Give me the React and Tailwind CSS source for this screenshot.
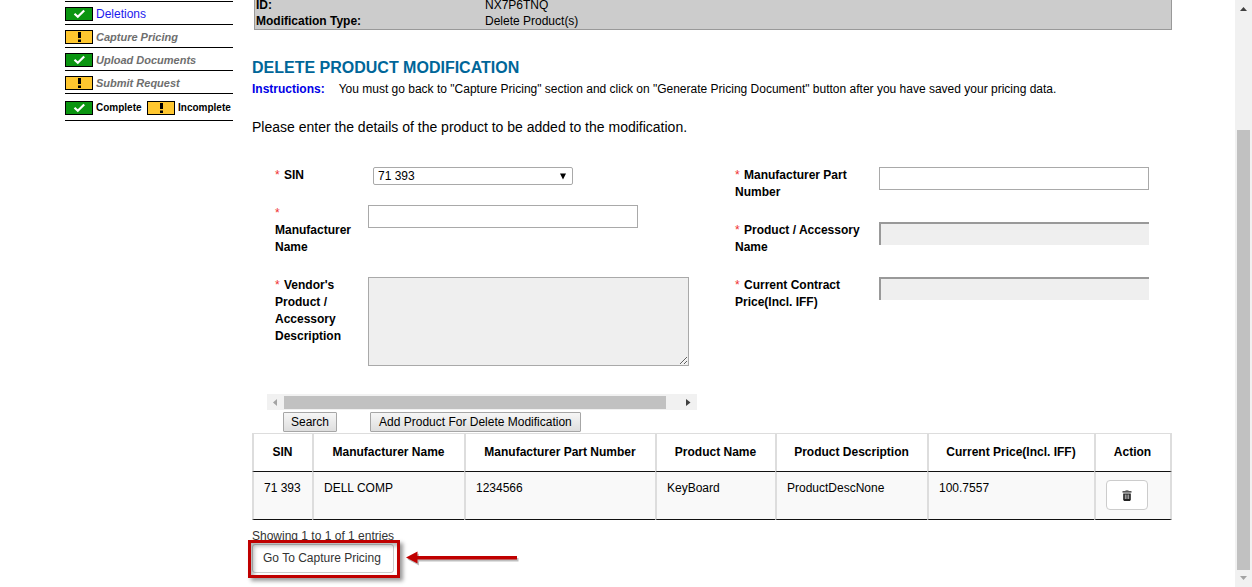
import React from "react";

const NAV = [
  { label: "Deletions", done: true, current: true },
  { label: "Capture Pricing", done: false },
  { label: "Upload Documents", done: true },
  { label: "Submit Request", done: false },
];

const PRODUCTS = [
  {
    sin: "71 393",
    manufacturer: "DELL COMP",
    part: "1234566",
    name: "KeyBoard",
    description: "ProductDescNone",
    price: "100.7557",
  },
];

function StatusIcon({ done }) {
  return (
    <svg viewBox="0 0 28 14" className="h-[14px] w-7 shrink-0" aria-hidden="true">
      <rect x="0.5" y="0.5" width="27" height="13" fill={done ? "#0a9510" : "#ffc72f"} stroke="#000" />
      {done ? (
        <path d="M9.500 6.800l3.300 3L19.200 3.500" fill="none" stroke="#fff" strokeWidth="2.200" />
      ) : (
        <path d="M13 2h3v6h-3zM13 9.500h3V12h-3z" fill="#000" />
      )}
    </svg>
  );
}

function Sidebar() {
  return (
    <nav className="ml-[65px] w-[168px] shrink-0 pt-px">
      <ul className="border-t border-black">
        {NAV.map((item) => (
          <li key={item.label} className="flex h-[23px] items-center gap-[3px] border-b border-black pt-[2px]">
            <StatusIcon done={item.done} />
            <a
              href="#"
              className={
                item.current
                  ? "text-[12px] leading-4 text-[#1a1aee]"
                  : "text-[11px] leading-4 font-bold text-[#6e6e6e] italic"
              }
            >
              {item.label}
            </a>
          </li>
        ))}
        <li className="flex h-[27px] items-center border-b border-black pt-[2px] text-[10px] leading-4 font-bold">
          <StatusIcon done />
          <span className="ml-[3px] w-[51px]">Complete</span>
          <StatusIcon done={false} />
          <span className="ml-[3px]">Incomplete</span>
        </li>
      </ul>
    </nav>
  );
}

function Label({ htmlFor, className, children }) {
  return (
    <label htmlFor={htmlFor} className={`shrink-0 pt-px font-bold ${className}`}>
      <span className="mr-px font-normal text-[#f03030]">*</span> {children}
    </label>
  );
}

const PLAIN = "h-[23px] w-[270px] border border-[#a9a9a9] bg-white px-1";
const SUNK =
  "h-[23px] w-[270px] border-t-2 border-l-2 border-[#999] bg-[#efefef] px-1";

function HorizontalBar() {
  return (
    <div className="flex h-4 items-center bg-[#f1f1f1]" aria-hidden="true">
      <svg viewBox="0 0 17 16" className="h-4 w-[17px]">
        <path d="M10 5v7L6 8.5z" fill="#a3a3a3" />
      </svg>
      <div className="h-[13px] w-[382px] bg-[#c1c1c1]" />
      <svg viewBox="0 0 17 16" className="ml-auto h-4 w-[17px]">
        <path d="M6 5v7l4.500-3.500z" fill="#404040" />
      </svg>
    </div>
  );
}

function ProductForm() {
  return (
    <form className="flex justify-between pr-[23px] pl-[15px]" onSubmit={(e) => e.preventDefault()}>
      <div className="w-[430px]">
        <div className="flex h-[38px] items-start pl-2">
          <Label htmlFor="sin" className="w-[98px]">SIN</Label>
          <div className="relative mt-px">
            <select
              id="sin"
              className="h-[18px] w-[200px] appearance-none rounded-[2px] border border-[#a9a9a9] bg-white pl-1 leading-4"
            >
              <option>71 393</option>
            </select>
            <svg viewBox="0 0 8 7" className="pointer-events-none absolute top-[6px] right-[6px] h-[7px] w-2" aria-hidden="true">
              <path d="M1 0.500h6L4 6.500z" fill="#000" />
            </svg>
          </div>
        </div>
        <div className="flex h-[72px] items-start pl-2">
          <Label htmlFor="manufacturer" className="w-[93px] pr-3">Manufacturer Name</Label>
          <input id="manufacturer" className={PLAIN + " mt-px"} />
        </div>
        <div className="flex h-[118px] items-start pl-2">
          <Label htmlFor="description" className="w-[93px] pr-5">Vendor's Product / Accessory Description</Label>
          <textarea id="description" readOnly className="mt-px h-[89px] w-[321px] resize border border-[#a9a9a9] bg-[#efefef] p-1" />
        </div>
        <HorizontalBar />
        <div className="flex h-[23px] items-start gap-[33px] pt-[2px] pl-4">
          <button type="button" className="h-5 rounded-[1px] border border-[#a6a6a6] bg-linear-to-b from-[#f6f6f6] to-[#dedede] px-[7px] leading-4 whitespace-nowrap">
            Search
          </button>
          <button type="submit" className="h-5 rounded-[1px] border border-[#a6a6a6] bg-linear-to-b from-[#f6f6f6] to-[#dedede] px-2 leading-4 whitespace-nowrap">
            Add Product For Delete Modification
          </button>
        </div>
      </div>
      <div>
        <div className="flex h-[55px] items-start">
          <Label htmlFor="part" className="w-36 pr-4">Manufacturer Part Number</Label>
          <input id="part" className={PLAIN + " mt-px"} />
        </div>
        <div className="flex h-[55px] items-start">
          <Label htmlFor="product" className="w-36 pr-4">Product / Accessory Name</Label>
          <input id="product" readOnly className={SUNK + " mt-px"} />
        </div>
        <div className="flex h-[55px] items-start">
          <Label htmlFor="price" className="w-36 pr-4">Current Contract Price(Incl. IFF)</Label>
          <input id="price" readOnly className={SUNK + " mt-px"} />
        </div>
      </div>
    </form>
  );
}

function TrashIcon() {
  return (
    <svg viewBox="0 0 10 11" className="h-[11px] w-[10px]" aria-hidden="true">
      <path d="M3.500 1.500h3V0.500h-3zM0.500 1.300h9v1.200h-9z" fill="#222" />
      <path d="M1.200 3.500h7.600v6.200L8 11H2l-0.800-1.300z" fill="#222" />
      <path d="M3.300 4.500v4.500M5 4.500v4.500M6.700 4.500v4.500" stroke="#ddd" strokeWidth="0.800" />
    </svg>
  );
}

function ProductTable() {
  const th = "border-l-2 border-[#ddd] pr-px text-center font-bold";
  const td = "border-l-2 border-[#ddd] px-[10px] pt-2 text-left align-top";
  return (
    <table className="w-full table-fixed border-separate border-spacing-0">
      <colgroup>
        <col className="w-[60px]" />
        <col className="w-[152px]" />
        <col className="w-[191px]" />
        <col className="w-[120px]" />
        <col className="w-[152px]" />
        <col className="w-[167px]" />
        <col />
      </colgroup>
      <thead>
        <tr className="h-[39px]">
          {["SIN", "Manufacturer Name", "Manufacturer Part Number", "Product Name", "Product Description", "Current Price(Incl. IFF)", "Action"].map(
            (h) => (
              <th key={h} className={th + " border-t border-b border-b-[#111] border-t-[#ddd] last:border-r-2"}>
                {h}
              </th>
            )
          )}
        </tr>
      </thead>
      <tbody>
        {PRODUCTS.map((p) => (
          <tr key={p.part} className="h-12 bg-[#f9f9f9]">
            {[p.sin, p.manufacturer, p.part, p.name, p.description, p.price].map((v) => (
              <td key={v} className={td + " border-b border-b-[#111]"}>
                {v}
              </td>
            ))}
            <td className={td + " border-r-2 border-b border-b-[#111]"}>
              <button
                type="button"
                aria-label="Delete product"
                className="flex h-[30px] w-[42px] items-center justify-center rounded-[4px] border border-[#ccc] bg-white"
              >
                <TrashIcon />
              </button>
            </td>
          </tr>
        ))}
      </tbody>
    </table>
  );
}

function VerticalBar() {
  return (
    <div className="flex h-screen w-[17px] shrink-0 flex-col items-center bg-[#f1f1f1]" aria-hidden="true">
      <svg viewBox="0 0 17 17" className="h-[17px] w-[17px]">
        <path d="M5 11h7L8.500 7z" fill="#404040" />
      </svg>
      <div className="mt-[113px] w-[13px] flex-1 bg-[#c1c1c1]" />
      <svg viewBox="0 0 17 17" className="h-[17px] w-[17px]">
        <path d="M5 6h7L8.500 10z" fill="#a3a3a3" />
      </svg>
    </div>
  );
}

export default function App() {
  return (
    <div className="flex h-screen overflow-hidden bg-white font-['Liberation_Sans',Arial,sans-serif] text-[12px] leading-[17px] text-black">
      <Sidebar />
      <main className="mr-[63px] ml-[19px] min-w-0 flex-1">
        <dl className="-mt-1 ml-[2px] grid grid-cols-[229px_1fr] border border-[#999] bg-[#ccc] pl-px leading-4">
          <dt className="font-bold">ID:</dt>
          <dd>NX7P6TNQ</dd>
          <dt className="font-bold">Modification Type:</dt>
          <dd>Delete Product(s)</dd>
        </dl>
        <h1 className="pt-[26px] text-[16px] leading-6 font-bold text-[#069]">DELETE PRODUCT MODIFICATION</h1>
        <p className="mt-px">
          <span className="mr-[14px] font-bold text-[#0000e6]">Instructions:</span>
          You must go back to "Capture Pricing" section and click on "Generate Pricing Document" button after you have saved your pricing data.
        </p>
        <p className="mt-5 mb-[30px] text-[14px] leading-[18px]">
          Please enter the details of the product to be added to the modification.
        </p>
        <ProductForm />
        <ProductTable />
        <p className="pt-[7px] leading-[18px] text-[#333]">Showing 1 to 1 of 1 entries</p>
        <div className="relative -mt-px w-fit">
          <button type="button" className="h-[29px] rounded-[3px] border border-[#ccc] bg-white pr-3 pl-[10px] text-[#333]">
            Go To Capture Pricing
          </button>
          <div className="pointer-events-none absolute -top-1 -left-1 h-[38px] w-[152px] border-3 border-[#c00000] shadow-[3px_3px_4px_rgba(0,0,0,0.4),inset_3px_3px_4px_rgba(0,0,0,0.3)]" />
          <svg viewBox="0 0 118 20" className="pointer-events-none absolute top-1 left-[151px] h-5 w-[118px]" aria-hidden="true">
            <g fill="#000" opacity="0.25" transform="translate(1.500 2)">
              <path d="M3 9.500l11.500-6V8H114v3.500H14.500v4z" />
            </g>
            <path d="M3 9.500l11.500-6V8H114v3.500H14.500v4z" fill="#c00000" />
          </svg>
        </div>
      </main>
      <VerticalBar />
    </div>
  );
}
